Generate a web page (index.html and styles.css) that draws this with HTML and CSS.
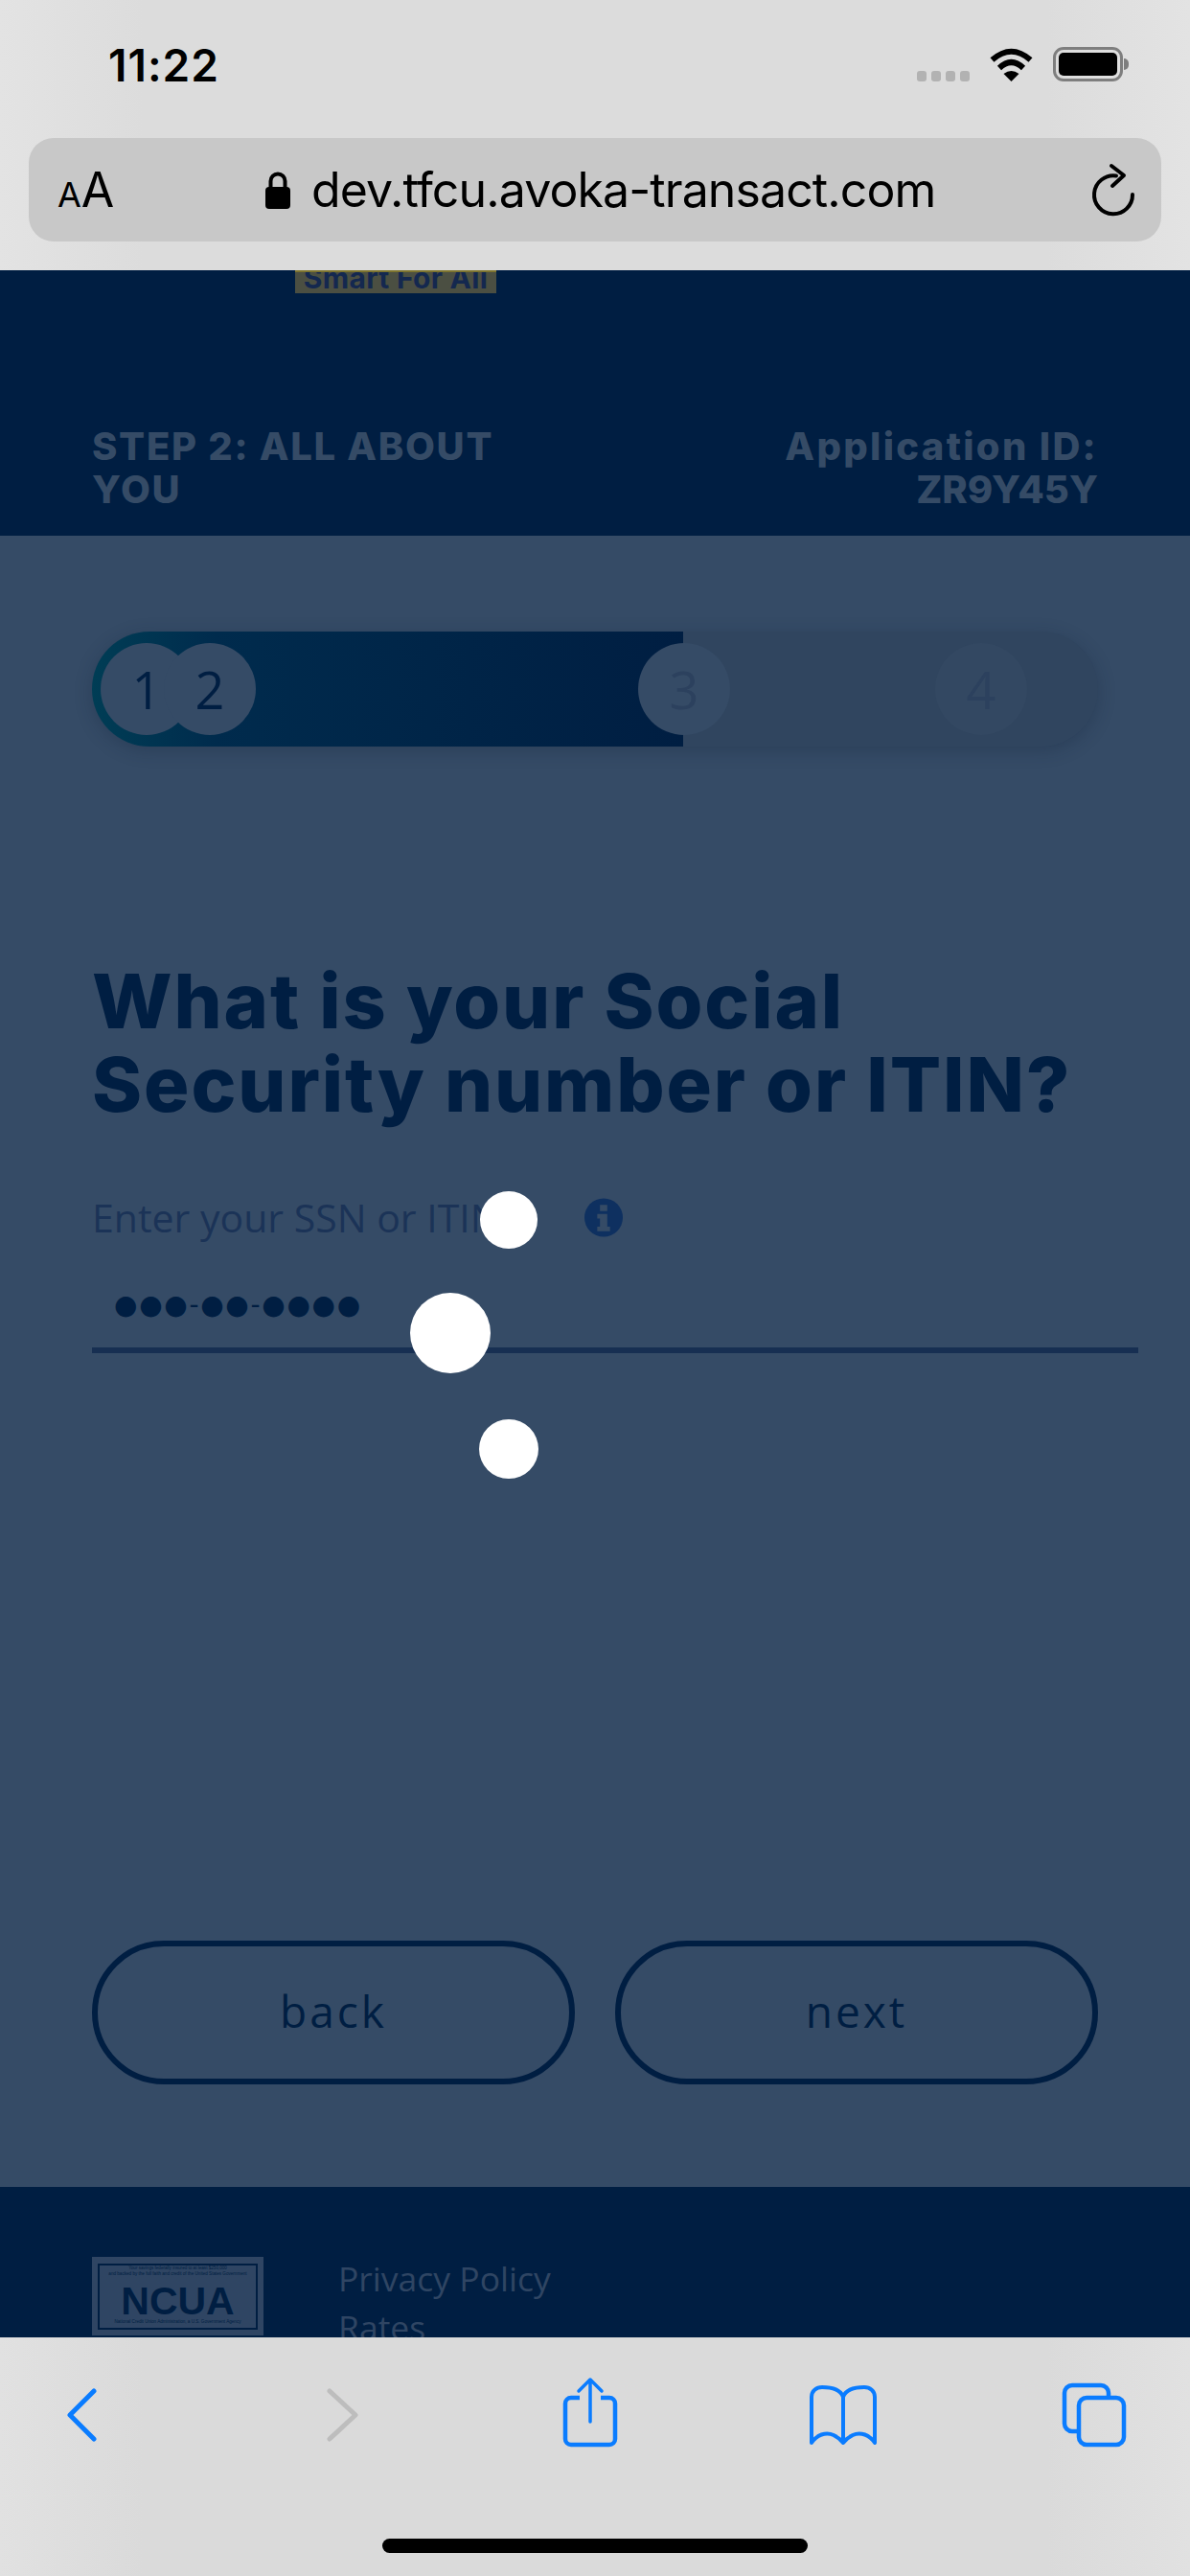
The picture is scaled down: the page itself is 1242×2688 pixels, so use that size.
FILE: index.html
```html
<!DOCTYPE html>
<html lang="en">
<head>
    <meta charset="UTF-8">
    <meta name="viewport" content="width=device-width, initial-scale=1.0">
    <title>Step 2: All About You</title>
    <link rel="stylesheet" href="styles.css">
</head>
<body>

    <!-- Safari top chrome -->
    <div class="top-chrome">
        <div class="status-bar">
            <span class="time">11:22</span>
            <div class="status-icons">
                <div class="signal"><i></i><i></i><i></i><i></i></div>
                <svg class="wifi" width="47" height="36" viewBox="0 0 47 36">
                    <path d="M3.500 13.500 Q23.500 -4 43.500 13.500" fill="none" stroke="#000" stroke-width="6"/>
                    <path d="M11 22 Q23.500 10 36 22" fill="none" stroke="#000" stroke-width="6"/>
                    <path d="M23.500 36 L15.500 28 Q23.500 22 31.500 28 Z"/>
                </svg>
                <div class="battery"><div class="battery-fill"></div></div>
                <div class="battery-cap"></div>
            </div>
        </div>
        <div class="address-bar">
            <div class="aa"><span class="aa-small">A</span><span class="aa-big">A</span></div>
            <div class="url">
                <svg class="lock" width="28" height="39" viewBox="0 0 28 39">
                    <path d="M6.500 18 V10 a7.500 7.500 0 0 1 15 0 V18" fill="none" stroke="#000" stroke-width="4"/>
                    <rect x="1" y="16" width="26" height="23" rx="4"/>
                </svg>
                <span>dev.tfcu.avoka-transact.com</span>
            </div>
            <svg class="reload" width="52" height="60" viewBox="0 0 52 60">
                <path d="M29 15.500 A20 20 0 1 0 46 35" fill="none" stroke="#000" stroke-width="4" stroke-linecap="round"/>
                <path d="M24 5 L37 15 L25 26" fill="none" stroke="#000" stroke-width="4" stroke-linecap="round" stroke-linejoin="round"/>
            </svg>
        </div>
    </div>

    <!-- Page, dimmed by the loading overlay -->
    <div class="page">
        <div class="site-header">
            <div class="logo-tag">Smart For All</div>
            <div class="step-row">
                <div class="step-title">STEP 2: ALL ABOUT YOU</div>
                <div class="app-id">Application ID:<br><span class="app-code">ZR9Y45Y</span></div>
            </div>
        </div>

        <div class="content">
            <div class="progress">
                <div class="progress-fill"></div>
                <div class="step-dot dot-1">1</div>
                <div class="step-dot dot-2">2</div>
                <div class="step-dot dot-3">3</div>
                <div class="step-dot dot-4">4</div>
            </div>

            <h1>What is your Social Security number or ITIN?</h1>

            <div class="field-label">
                <span>Enter your SSN or ITIN</span>
                <svg class="info" width="40" height="41" viewBox="0 0 42 42">
                    <circle cx="21" cy="21" r="21" fill="#0e3060"/>
                    <path d="M17 7 h8 v7 h-8 Z M14 17 h11 v14 h3 v5 h-14 v-5 h3 v-9 h-3 Z" fill="#354b66"/>
                </svg>
            </div>
            <div class="field-value">●●●-●●-●●●●</div>

            <div class="buttons">
                <button class="btn">back</button>
                <button class="btn">next</button>
            </div>
        </div>

        <div class="site-footer">
            <div class="ncua">
                <div class="ncua-inner">
                    <div class="ncua-small">Your savings federally insured to at least $250,000<br>and backed by the full faith and credit of the United States Government</div>
                    <div class="ncua-name">NCUA</div>
                    <div class="ncua-small">National Credit Union Administration, a U.S. Government Agency</div>
                </div>
            </div>
            <div class="footer-links">
                <div>Privacy Policy</div>
                <div>Rates</div>
            </div>
        </div>

        <!-- Loading spinner dots -->
        <div class="spinner-dot spin-top"></div>
        <div class="spinner-dot spin-left"></div>
        <div class="spinner-dot spin-bottom"></div>
    </div>

    <!-- Safari bottom toolbar -->
    <div class="bottom-chrome">
        <div class="toolbar">
            <svg class="tool tool-back" width="36" height="56" viewBox="0 0 36 56">
                <path d="M30 3 L5 28 L30 53" fill="none" stroke="#0a7cff" stroke-width="5" stroke-linecap="round" stroke-linejoin="round"/>
            </svg>
            <svg class="tool tool-forward" width="36" height="56" viewBox="0 0 36 56">
                <path d="M4 3 L31 28 L4 53" fill="none" stroke="#bdbdbd" stroke-width="5" stroke-linecap="round" stroke-linejoin="round"/>
            </svg>
            <svg class="tool tool-share" width="58" height="74" viewBox="0 0 58 74">
                <path d="M18 22 H9 a6 6 0 0 0 -6 6 V65 a6 6 0 0 0 6 6 H49 a6 6 0 0 0 6 -6 V28 a6 6 0 0 0 -6 -6 H40" fill="none" stroke="#0a7cff" stroke-width="4.500"/>
                <path d="M29 47 V3 M17 15 L29 3 L41 15" fill="none" stroke="#0a7cff" stroke-width="3.500" stroke-linecap="round" stroke-linejoin="round"/>
            </svg>
            <svg class="tool tool-book" width="72" height="62" viewBox="0 0 72 62">
                <path d="M36 12 C33 4 24 2 14 2 C8 2 3 6 3 12 V60 C8 52 18 48 26 52 C30 54 33 56 36 60 C39 56 42 54 46 52 C54 48 64 52 69 60 V12 C69 6 64 2 58 2 C48 2 39 4 36 12 Z M36 12 V58" fill="none" stroke="#0a7cff" stroke-width="4" stroke-linejoin="round"/>
            </svg>
            <svg class="tool tool-tabs" width="68" height="68" viewBox="0 0 68 68">
                <path d="M17 51 H11 a8 8 0 0 1 -8 -8 V11 a8 8 0 0 1 8 -8 H41 a8 8 0 0 1 8 8 V15" fill="none" stroke="#0a7cff" stroke-width="4.500"/>
                <rect x="18" y="16" width="47" height="49" rx="8" fill="none" stroke="#0a7cff" stroke-width="4.500"/>
            </svg>
        </div>
        <div class="home-bar"></div>
    </div>

</body>
</html>
```

FILE: styles.css
```css
* {
    box-sizing: border-box;
}
html, body {
    margin: 0;
    padding: 0;
}
body {
    width: 1242px;
    height: 2688px;
    overflow: hidden;
    display: flex;
    flex-direction: column;
    background-color: #dadada;
    font-family: 'Open Sans', sans-serif;
}

/* Top chrome */
.top-chrome {
    height: 282px;
    flex-shrink: 0;
    padding: 0 30px;
    background: linear-gradient(90deg, #e3e3e3, #dcdcdc 12%, #dcdcdc 88%, #e3e3e3);
}
.status-bar {
    height: 144px;
    display: flex;
    justify-content: space-between;
    align-items: flex-start;
    padding: 40px 34px 0 83px;
}
.time {
    font-family: 'Inter', sans-serif;
    font-weight: 600;
    font-size: 46px;
    letter-spacing: 1px;
    line-height: 56px;
    color: #000;
}
.status-icons {
    display: flex;
    align-items: center;
    height: 36px;
    margin-top: 9px;
}
.signal {
    display: flex;
    gap: 5px;
    align-self: flex-end;
    margin-right: 20px;
}
.signal i {
    width: 10px;
    height: 11px;
    border-radius: 3px;
    background-color: #b2b2b2;
}
.wifi {
    fill: #000;
    margin-right: 20px;
}
.battery {
    width: 73px;
    height: 36px;
    padding: 3px;
    border: 3px solid #7e7e7e;
    border-radius: 11px;
}
.battery-fill {
    height: 100%;
    border-radius: 5px;
    background-color: #000;
}
.battery-cap {
    width: 5px;
    height: 12px;
    margin-left: 1px;
    border-radius: 0 6px 6px 0;
    background-color: #7e7e7e;
}
.address-bar {
    height: 108px;
    display: flex;
    align-items: center;
    padding: 0 24px 0 30px;
    border-radius: 26px;
    background-color: #c8c8c8;
}
.aa {
    flex-shrink: 0;
    width: 62px;
    padding-top: 12px;
    font-family: 'Inter', sans-serif;
    color: #000;
    line-height: 50px;
    white-space: nowrap;
}
.aa-small {
    font-size: 36px;
}
.aa-big {
    font-size: 50px;
}
.url {
    display: flex;
    align-items: center;
    gap: 21px;
    margin-left: 154px;
    font-family: 'Inter', sans-serif;
    font-size: 50px;
    letter-spacing: -0.9px;
    color: #000;
}
.reload {
    flex-shrink: 0;
    margin-left: auto;
}

/* Page */
.page {
    position: relative;
    flex: 1;
    display: flex;
    flex-direction: column;
    overflow: hidden;
    background-color: #354b66;
}
.site-header {
    height: 277px;
    flex-shrink: 0;
    background-color: #001e42;
}
.logo-tag {
    width: 210px;
    height: 24px;
    margin-left: 308px;
    overflow: hidden;
    border-top: 2px solid #7d7430;
    text-align: center;
    white-space: nowrap;
    font-family: 'Inter', sans-serif;
    font-weight: 700;
    font-size: 30px;
    letter-spacing: 0.3px;
    line-height: 12px;
    color: #14284f;
    background-color: #4b4f42;
}
.step-row {
    display: flex;
    justify-content: space-between;
    margin-top: 137px;
    padding: 0 96px;
    font-family: 'Inter', sans-serif;
    font-weight: 800;
    font-size: 40px;
    line-height: 45px;
    color: #354b66;
}
.step-title {
    width: 480px;
    letter-spacing: 1.7px;
}
.app-id {
    text-align: right;
    letter-spacing: 2.3px;
}
.app-code {
    letter-spacing: 0;
}
.content {
    height: 1723px;
    flex-shrink: 0;
    padding: 100px 96px 0;
}
.progress {
    position: relative;
    width: 1050px;
    height: 120px;
    border-radius: 60px;
    overflow: hidden;
    background-color: #30455f;
    box-shadow: 0 4px 18px rgba(20, 35, 60, 0.3);
}
.progress-fill {
    width: 617px;
    height: 100%;
    background: linear-gradient(90deg, #003d55 0%, #002b4d 21%, #001e42 100%);
}
.step-dot {
    position: absolute;
    top: 12px;
    width: 96px;
    height: 96px;
    border-radius: 50%;
    text-align: center;
    font-size: 54px;
    line-height: 96px;
    color: #001e42;
    background-color: #354b66;
}
.dot-1 { left: 9px; }
.dot-2 { left: 75px; }
.dot-3 { left: 570px; color: #2c415e; }
.dot-4 { left: 880px; color: #2c415e; background-color: #334862; }

h1 {
    margin: 222px 0 0;
    font-family: 'Inter', sans-serif;
    font-weight: 800;
    font-size: 79px;
    letter-spacing: 1.9px;
    line-height: 87px;
    color: #001e42;
}
.field-label {
    display: flex;
    align-items: center;
    gap: 88px;
    margin-top: 70px;
    height: 50px;
    font-size: 41px;
    color: #1b3357;
}
.field-value {
    height: 117px;
    width: 1092px;
    padding: 43px 0 0 23px;
    border-bottom: 6px solid #172f52;
    font-family: 'DejaVu Sans', sans-serif;
    font-size: 28px;
    letter-spacing: 1.7px;
    line-height: 48px;
    color: #001e42;
}
.buttons {
    display: flex;
    gap: 42px;
    margin-top: 613px;
}
.btn {
    width: 504px;
    height: 150px;
    padding: 0 0 5px;
    background: none;
    border: 6px solid #001e42;
    border-radius: 75px;
    font-family: 'Open Sans', sans-serif;
    font-weight: 500;
    font-size: 46px;
    letter-spacing: 3px;
    color: #001e42;
}
.site-footer {
    flex: 1;
    display: flex;
    gap: 78px;
    padding: 73px 96px 0;
    background-color: #001e42;
}
.ncua {
    width: 179px;
    height: 82px;
    flex-shrink: 0;
    padding: 7px 6px 6px;
    background-color: #2f4563;
}
.ncua-inner {
    height: 100%;
    border: 2px solid #001e42;
    text-align: center;
    color: #001e42;
}
.ncua-small {
    font-family: 'Liberation Sans', sans-serif;
    font-size: 4.600px;
    line-height: 6px;
    white-space: nowrap;
    overflow: hidden;
}
.ncua-name {
    margin: 3px 0 -3px;
    font-family: 'Liberation Sans', sans-serif;
    font-weight: 700;
    font-size: 41px;
    line-height: 44px;
}
.footer-links {
    margin-top: -3px;
    font-size: 35.500px;
    line-height: 51px;
    color: #2f4563;
}
.spinner-dot {
    position: absolute;
    border-radius: 50%;
    background-color: #fff;
}
.spin-top {
    left: 501px;
    top: 961px;
    width: 60px;
    height: 60px;
}
.spin-left {
    left: 428px;
    top: 1067px;
    width: 84px;
    height: 84px;
}
.spin-bottom {
    left: 500px;
    top: 1199px;
    width: 62px;
    height: 62px;
}

/* Bottom chrome */
.bottom-chrome {
    height: 249px;
    flex-shrink: 0;
    position: relative;
    background: linear-gradient(90deg, #e1e1e1, #dadada 12%, #dadada 88%, #e1e1e1);
}
.toolbar {
    position: relative;
    height: 170px;
}
.tool {
    position: absolute;
}
.tool-back { left: 68px; top: 53px; }
.tool-forward { left: 340px; top: 53px; }
.tool-share { left: 587px; top: 41px; }
.tool-book { left: 844px; top: 50px; }
.tool-tabs { left: 1108px; top: 47px; }
.home-bar {
    position: absolute;
    left: 399px;
    top: 210px;
    width: 444px;
    height: 15px;
    border-radius: 8px;
    background-color: #000;
}
```
